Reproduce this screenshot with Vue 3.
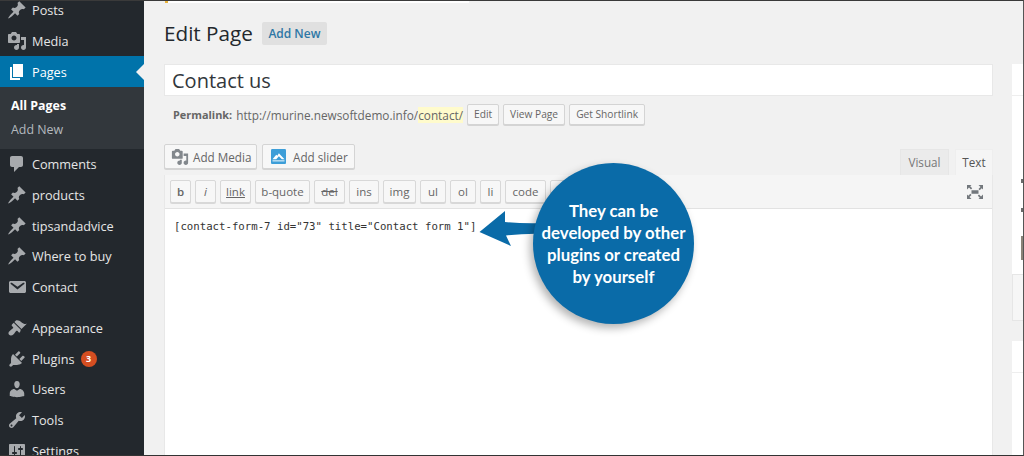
<script setup>
const pin = 'M10.44 3.02l1.82-1.82 6.36 6.35-1.83 1.82c-1.05-.68-2.48-.57-3.41.36l-.75.75c-.92.93-1.04 2.35-.35 3.41l-1.83 1.82-2.41-2.41-2.8 2.79c-.42.42-3.38 2.71-3.8 2.29s1.86-3.39 2.28-3.81l2.79-2.79L4.1 9.36l1.83-1.82c1.05.69 2.48.57 3.4-.36l.75-.75c.93-.92 1.05-2.35.36-3.41z'
const media = 'M13 11V4c0-.55-.45-1-1-1h-1.67L9 1H5L3.67 3H2c-.55 0-1 .45-1 1v7c0 .55.45 1 1 1h10c.55 0 1-.45 1-1zM7 4.5c1.38 0 2.5 1.12 2.5 2.5S8.38 9.5 7 9.5 4.5 8.38 4.5 7 5.62 4.5 7 4.5zM14 6h5v10.5c0 1.38-1.12 2.5-2.5 2.5S14 17.88 14 16.5s1.12-2.5 2.5-2.5c.17 0 .34.02.5.05V9h-3V6zm-4 8.05V13h2v3.5c0 1.38-1.12 2.5-2.5 2.5S7 17.88 7 16.5 8.12 14 9.5 14c.17 0 .34.02.5.05z'
const topMenu = [
  { label: 'Posts', d: pin },
  { label: 'Media', d: media },
  { label: 'Pages', d: 'M6 15V2h10v13H6zm-1 1h8v2H3V5h2v11z', active: true }
]
const midMenu = [
  { label: 'Comments', d: 'M5 2h9c1.1 0 2 .9 2 2v7c0 1.1-.9 2-2 2h-2l-5 5v-5H5c-1.1 0-2-.9-2-2V4c0-1.1.9-2 2-2z' },
  { label: 'products', d: pin },
  { label: 'tipsandadvice', d: pin },
  { label: 'Where to buy', d: pin },
  { label: 'Contact', d: 'M3.87 4h13.25C18.37 4 19 4.59 19 5.79v8.42c0 1.19-.63 1.79-1.88 1.79H3.87c-1.25 0-1.88-.6-1.88-1.79V5.79c0-1.2.63-1.79 1.88-1.79zm6.62 8.6l6.74-5.53c.24-.2.43-.66.13-1.07-.29-.41-.82-.42-1.17-.17l-5.7 3.86L4.8 5.83c-.35-.25-.88-.24-1.17.17-.3.41-.11.87.13 1.07z' }
]
const lowMenu = [
  { label: 'Appearance', d: 'M14.48 11.06L7.41 3.99l1.5-1.5c.5-.56 2.3-.47 3.51.32 1.21.8 1.43 1.28 2.91 2.1 1.18.64 2.45 1.26 4.45.85zm-.71.71L6.7 4.7 4.93 6.47c-.39.39-.39 1.02 0 1.41l1.06 1.06c.39.39.39 1.03 0 1.42-.6.6-1.43 1.11-2.21 1.69-.35.26-.7.53-1.01.84C1.43 13.71.96 15.65 2.15 16.85c1.18 1.19 3.13.71 4.47-.55.3-.31.57-.66.83-1.01.58-.78 1.1-1.61 1.7-2.21.39-.39 1.02-.39 1.41 0l1.06 1.06c.39.39 1.02.39 1.41 0z' },
  { label: 'Plugins', badge: '3', d: 'M13.11 4.36L9.87 7.6 8 5.73l3.24-3.24c.35-.34 1.05-.2 1.56.32.52.51.66 1.21.31 1.55zm-8 1.77l.91-1.12 9.01 9.01-1.19.84c-.71.71-2.63 1.16-3.82 1.16H6.14L4.9 17.26c-.59.59-1.54.59-2.12 0-.59-.58-.59-1.53 0-2.12l1.24-1.24v-3.88c0-1.13.4-3.19 1.09-3.89zm7.26 3.97l3.24-3.24c.34-.35 1.04-.21 1.55.31.52.51.66 1.21.31 1.55l-3.24 3.25z' },
  { label: 'Users', d: 'M10 9.25c-2.27 0-2.73-3.44-2.73-3.44C7 4.02 7.82 2 9.97 2c2.16 0 2.98 2.02 2.71 3.81 0 0-.41 3.44-2.68 3.44zm0 2.57L12.72 10c2.39 0 4.52 2.33 4.52 4.53v2.49s-3.65 1.13-7.24 1.13c-3.65 0-7.24-1.13-7.24-1.13v-2.49c0-2.25 1.94-4.48 4.47-4.48z' },
  { label: 'Tools', d: 'M16.68 9.77c-1.34 1.34-3.3 1.67-4.95.99l-5.41 6.52c-.99.99-2.59.99-3.58 0s-.99-2.59 0-3.57l6.52-5.42c-.68-1.65-.35-3.61.99-4.95 1.28-1.28 3.12-1.62 4.72-1.06l-2.89 2.89 2.82 2.82 2.86-2.87c.53 1.58.18 3.39-1.08 4.65zM3.81 16.21c.4.39 1.04.39 1.43 0 .4-.4.4-1.04 0-1.43-.39-.4-1.03-.4-1.43 0-.39.39-.39 1.03 0 1.43z' },
  { label: 'Settings', d: 'M18 16V4c0-.55-.45-1-1-1H3c-.55 0-1 .45-1 1v12c0 .55.45 1 1 1h14c.55 0 1-.45 1-1zM8 11h1c.55 0 1 .45 1 1s-.45 1-1 1H8v1.5c0 .28-.22.5-.5.5s-.5-.22-.5-.5V13H6c-.55 0-1-.45-1-1s.45-1 1-1h1V5.5c0-.28.22-.5.5-.5s.5.22.5.5V11zm5-2h-1c-.55 0-1-.45-1-1s.45-1 1-1h1V5.5c0-.28.22-.5.5-.5s.5.22.5.5V7h1c.55 0 1 .45 1 1s-.45 1-1 1h-1v5.5c0 .28-.22.5-.5.5s-.5-.22-.5-.5V9z' }
]
const quicktags = [
  { t: 'b', cls: 'q-b', w: 21 },
  { t: 'i', cls: 'q-i', w: 21 },
  { t: 'link', cls: 'q-link', w: 31 },
  { t: 'b-quote', w: 55 },
  { t: 'del', cls: 'q-del', w: 31 },
  { t: 'ins', w: 30 },
  { t: 'img', w: 33 },
  { t: 'ul', w: 26 },
  { t: 'ol', w: 26 },
  { t: 'li', w: 21 },
  { t: 'code', w: 41 },
  { t: 'more', w: 40 }
]
</script>

<template>
  <div class="frame">
    <aside class="sidebar">
      <ul class="menu menu-top">
        <li v-for="m in topMenu" :key="m.label" class="item" :class="{ active: m.active }">
          <svg class="ico" viewBox="0 0 20 20"><path :d="m.d" /></svg>
          <span>{{ m.label }}</span>
        </li>
      </ul>
      <ul class="sub">
        <li class="sub-current">All Pages</li>
        <li>Add New</li>
      </ul>
      <ul class="menu">
        <li v-for="m in midMenu" :key="m.label" class="item">
          <svg class="ico" viewBox="0 0 20 20"><path :d="m.d" /></svg>
          <span>{{ m.label }}</span>
        </li>
      </ul>
      <ul class="menu menu-low">
        <li v-for="m in lowMenu" :key="m.label" class="item">
          <svg class="ico" viewBox="0 0 20 20"><path :d="m.d" /></svg>
          <span>{{ m.label }}</span>
          <b v-if="m.badge" class="badge">{{ m.badge }}</b>
        </li>
      </ul>
    </aside>

    <main class="main">
      <div class="notice"></div>
      <div class="columns">
        <section class="content">
          <div class="head">
            <h1>Edit Page</h1>
            <a class="add-new">Add New</a>
          </div>
          <div class="title-input">Contact us</div>
          <div class="permalink">
            <strong>Permalink:</strong>
            <span class="url">http://murine.newsoftdemo.info/<mark>contact/</mark></span>
            <span class="small-btn b-edit">Edit</span>
            <span class="small-btn b-view">View Page</span>
            <span class="small-btn b-short">Get Shortlink</span>
          </div>

          <div class="editor-tools">
            <div class="media-btns">
              <span class="btn b-media">
                <svg class="btn-ico" viewBox="0 0 20 20"><path :d="media" /></svg>
                Add Media
              </span>
              <span class="btn b-slider">
                <svg class="slider-ico" viewBox="0 0 20 20">
                  <rect width="20" height="20" rx="1.5" fill="#3d9ed8" />
                  <path d="M2 13.5 L7 7.5 L8.5 9 L10.5 5.5 L18 13.5 L14.5 13.5 L10.5 9.5 L7 13.5 Z" fill="#fff" />
                  <rect x="2" y="15" width="16" height="1.6" fill="#d6ecf8" />
                </svg>
                Add slider
              </span>
            </div>
            <div class="tabs">
              <span class="tab">Visual</span>
              <span class="tab tab-on">Text</span>
            </div>
          </div>

          <div class="editor">
            <div class="toolbar">
              <span v-for="q in quicktags" :key="q.t" class="qt" :class="q.cls" :style="{ width: q.w + 'px' }">{{ q.t }}</span>
              <svg class="fs" viewBox="0 0 16 14">
                <path d="M0 0h4.5L3.2 1.3 5.2 3.3 4 4.5 2 2.5.8 3.8 0 4.5zM16 0v4.5L14.7 3.2 12.7 5.2 11.5 4 13.5 2 11.5 0zM0 14V9.5L1.3 10.8 3.3 8.8 4.5 10 2.5 12 4.5 14zM16 14h-4.500L12.800 12.700 10.800 10.700 12 9.500 14 11.500 16 9.500zM4.500 5.200h7v3.600h-7z" />
              </svg>
            </div>
            <div class="editarea">[contact-form-7 id="73" title="Contact form 1"]</div>
          </div>
        </section>

        <section class="side">
          <div class="side-box box-one">
            <div class="side-head"></div>
            <i class="speck s1"></i>
            <i class="speck s2"></i>
            <i class="speck s3"></i>
          </div>
          <div class="side-box box-two"></div>
          <div class="side-box box-three">
            <div class="side-head"></div>
          </div>
        </section>
      </div>
    </main>

    <div class="callout">
      <svg class="arrow" viewBox="0 0 70 40">
        <path d="M1.500 22 L27 1 L27 12 Q45 14 70 13 L70 24 Q48 23 28 25.500 L33 36 Z" fill="#0a6ba8" />
      </svg>
      <div class="bubble">They can be<br />developed by other<br />plugins or created<br />by yourself</div>
    </div>
  </div>
</template>

<style>
html, body { margin: 0; padding: 0; background: #f1f1f1; }
</style>

<style scoped>
.frame {
  position: relative;
  box-sizing: border-box;
  width: 1024px;
  height: 456px;
  display: flex;
  overflow: hidden;
  border-top: 1px solid #3a3a3a;
  border-right: 1px solid #555;
  border-bottom: 1px solid #333;
  font-family: "Open Sans", sans-serif;
  background: #f1f1f1;
}
ul { list-style: none; margin: 0; padding: 0; }

.sidebar {
  flex: 0 0 144px;
  width: 144px;
  background: #23282d;
  color: #e6e6e6;
  font-size: 12.7px;
  margin-top: -6px;
  height: 470px;
}
.item {
  display: flex;
  align-items: center;
  height: 30.7px;
  padding-left: 7px;
  position: relative;
}
.ico {
  width: 20px;
  height: 20px;
  margin-right: 5px;
  fill: #a7aaad;
  flex: none;
}
.item.active { background: #0073aa; color: #fff; }
.item.active .ico { fill: #fff; }
.item.active::after {
  content: "";
  position: absolute;
  right: 0;
  top: 50%;
  margin-top: -8px;
  border: 8px solid transparent;
  border-right-color: #f1f1f1;
  border-left-width: 0;
}
.sub {
  background: #32373c;
  padding: 7px 0 7px;
  height: 48px;
  font-size: 12.4px;
  color: #b4b9be;
}
.sub li { height: 24px; line-height: 24px; padding-left: 11px; }
.sub-current { color: #fff; font-weight: 700; }
.menu-low { margin-top: 10px; }
.badge {
  margin-left: 6px;
  width: 16px;
  height: 16px;
  border-radius: 50%;
  background: #d54e21;
  color: #fff;
  font-size: 9px;
  line-height: 16px;
  text-align: center;
}

.main { flex: 1; min-width: 0; position: relative; }
.notice {
  height: 2px;
  width: 304px;
  margin-left: 21px;
  background: #fff;
  border-left: 3px solid #e8b33c;
  box-sizing: border-box;
}
.columns { display: flex; padding-left: 20px; gap: 19px; }
.content { flex: 0 0 829px; width: 829px; }

.head { display: flex; align-items: center; height: 23px; margin-top: 19px; }
h1 {
  margin: 0;
  font-size: 20.7px;
  font-weight: 400;
  color: #23282d;
  line-height: 23px;
}
.add-new {
  margin-left: 9px;
  width: 65px;
  height: 23px;
  line-height: 23px;
  text-align: center;
  background: #e0e0e0;
  color: #2e77a5;
  font-size: 12px;
  font-weight: 600;
  border-radius: 2px;
}
.title-input {
  margin-top: 19px;
  height: 32px;
  line-height: 32px;
  box-sizing: border-box;
  padding-left: 7px;
  background: #fff;
  border: 1px solid #e8e8e8;
  font-size: 20px;
  color: #32373c;
}
.permalink {
  display: flex;
  align-items: center;
  margin-top: 8px;
  height: 21px;
  padding-left: 9px;
  font-size: 11.8px;
  color: #666;
}
.permalink strong { font-weight: 700; font-size: 10.9px; margin-right: 4px; }
mark { background: #fffbcc; color: #666; }
.small-btn {
  margin-left: 4px;
  height: 21px;
  line-height: 19px;
  box-sizing: border-box;
  text-align: center;
  font-size: 10.2px;
  color: #666;
  background: #f7f7f7;
  border: 1px solid #d4d4d4;
  border-radius: 2px;
  box-shadow: 0 1px 0 #d4d4d4;
}
.b-edit { width: 32px; }
.b-view { width: 62px; }
.b-short { width: 76px; }

.editor-tools {
  display: flex;
  justify-content: space-between;
  align-items: flex-end;
  margin-top: 19px;
  height: 31px;
}
.media-btns { display: flex; gap: 5px; align-self: flex-start; }
.btn {
  display: flex;
  align-items: center;
  box-sizing: border-box;
  height: 25px;
  font-size: 11.7px;
  color: #666;
  background: #f7f7f7;
  border: 1px solid #d4d4d4;
  border-radius: 2px;
  box-shadow: 0 1px 0 #d4d4d4;
}
.b-media { width: 93px; padding-left: 6px; }
.b-slider { width: 93px; padding-left: 8px; }
.btn-ico { width: 18px; height: 18px; fill: #82878c; margin-right: 4px; }
.slider-ico { width: 15px; height: 15px; margin-right: 7px; }
.tabs { display: flex; gap: 6px; }
.tab {
  box-sizing: border-box;
  height: 26px;
  line-height: 25px;
  width: 49px;
  text-align: center;
  font-size: 11.7px;
  color: #777;
  background: #ebebeb;
  border: 1px solid #e6e6e6;
  border-bottom: 0;
}
.tab-on {
  width: 38px;
  background: #f5f5f5;
  color: #555;
  border-color: #eee;
}

.editor { background: #fff; border: 1px solid #e8e8e8; border-top: 0; height: 290px; }
.toolbar {
  display: flex;
  align-items: center;
  gap: 4px;
  height: 34px;
  box-sizing: border-box;
  padding-left: 5px;
  background: #f5f5f5;
  border-bottom: 1px solid #e2e2e2;
  position: relative;
}
.qt {
  box-sizing: border-box;
  height: 23px;
  line-height: 21px;
  text-align: center;
  font-size: 11.5px;
  color: #666;
  background: #f7f7f7;
  border: 1px solid #d8d8d8;
  border-radius: 2px;
  box-shadow: 0 1px 0 #d8d8d8;
}
.q-b { font-weight: 600; }
.q-i { font-style: italic; }
.q-link { text-decoration: underline; }
.q-del { text-decoration: line-through; }
.fs {
  position: absolute;
  right: 9px;
  top: 10px;
  width: 16px;
  height: 14px;
  fill: #72777c;
}
.editarea {
  padding: 11px 9px;
  font-family: "DejaVu Sans Mono", monospace;
  font-size: 10.7px;
  line-height: 14px;
  color: #333;
}

.side { flex: 1; margin-top: 61px; min-width: 0; }
.side-box { background: #fff; position: relative; }
.box-one { height: 210px; }
.box-two { height: 47px; background: #f6f6f6; border: 1px solid #e6e6e6; border-right: 0; box-sizing: border-box; }
.box-three { height: 130px; margin-top: 20px; }
.side-head { height: 31px; border-bottom: 1px solid #eee; }
.speck { position: absolute; right: 0; width: 2px; height: 4px; background: #6b6b6b; }
.s1 { top: 115px; }
.s2 { top: 144px; }
.s3 { top: 172px; height: 24px; background: #8a8378; }

.callout {
  position: absolute;
  left: 478px;
  top: 162px;
  width: 220px;
  height: 170px;
}
.arrow {
  position: absolute;
  left: 0;
  top: 47px;
  width: 70px;
  height: 40px;
}
.bubble {
  position: absolute;
  left: 55px;
  top: 0;
  box-sizing: border-box;
  width: 161px;
  height: 161px;
  border-radius: 50%;
  background: #0a6ba8;
  box-shadow: -3px 4px 8px rgba(0, 0, 0, .3);
  color: #fff;
  font-family: Lato, sans-serif;
  font-weight: 700;
  font-size: 16.8px;
  line-height: 22px;
  text-align: center;
  padding-top: 37px;
}
</style>
